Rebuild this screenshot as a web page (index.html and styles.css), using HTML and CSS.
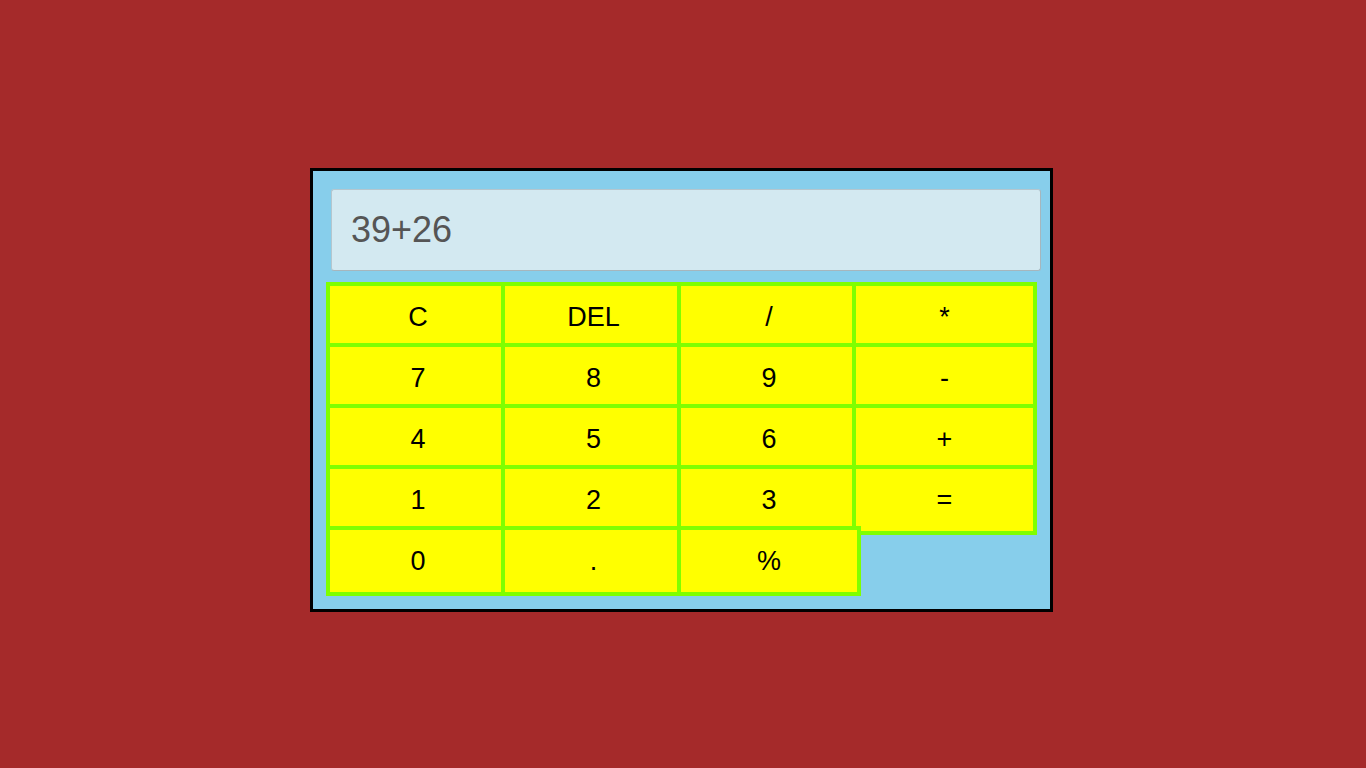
FILE: index.html
```html
<!DOCTYPE html>
<html lang="en">
<head>
<meta charset="utf-8">
<title>Calculator</title>
<link rel="stylesheet" href="styles.css">
</head>
<body>
<div class="calc">
  <div class="display">39+26</div>
  <div class="keys">
    <button class="key">C</button>
    <button class="key">DEL</button>
    <button class="key">/</button>
    <button class="key">*</button>
    <button class="key">7</button>
    <button class="key">8</button>
    <button class="key">9</button>
    <button class="key">-</button>
    <button class="key">4</button>
    <button class="key">5</button>
    <button class="key">6</button>
    <button class="key">+</button>
    <button class="key">1</button>
    <button class="key">2</button>
    <button class="key">3</button>
    <button class="key">=</button>
    <button class="key">0</button>
    <button class="key">.</button>
    <button class="key">%</button>
  </div>
</div>
</body>
</html>
```

FILE: styles.css
```css
html, body {
  margin: 0;
  padding: 0;
}

body {
  background: #a52a2a;
  font-family: "Liberation Sans", Arial, sans-serif;
  min-height: 768px;
}

.calc {
  box-sizing: border-box;
  width: 743px;
  margin: 168px 0 0 310px;
  border: 3px solid #000;
  background: #87ceeb;
  padding: 18px 9px 13px 18px;
}

.display {
  box-sizing: border-box;
  height: 82px;
  display: flex;
  align-items: center;
  padding: 0 0 0 19px;
  background: #d3e9f1;
  border: 1px solid #b4c6ce;
  border-right-color: #a6b6bd;
  border-bottom-color: #a6b6bd;
  border-radius: 3px;
  color: #555;
  font-size: 36px;
}

.keys {
  display: grid;
  grid-template-columns: 175px 176px 175px 176px;
  grid-template-rows: repeat(5, 61px);
  margin: 11px 0 9px -5px;
}

.key {
  box-sizing: border-box;
  margin: 0 -9px -9px 0;
  padding: 0;
  border: 4px solid #7fff00;
  background: #ffff00;
  color: #000;
  font-family: "Liberation Sans", Arial, sans-serif;
  font-size: 27px;
  display: flex;
  align-items: center;
  justify-content: center;
}
```
